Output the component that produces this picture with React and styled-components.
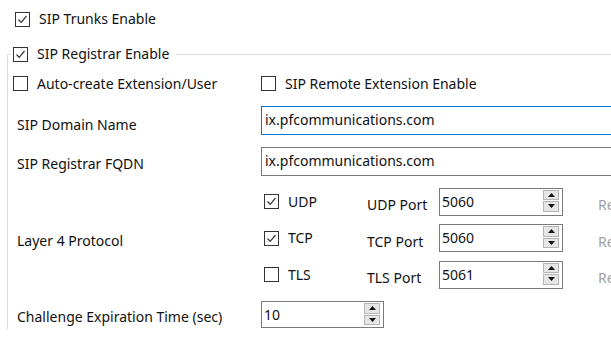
import React from 'react';
import styled, { createGlobalStyle } from 'styled-components';

const GlobalStyle = createGlobalStyle`
  html, body {
    margin: 0;
    padding: 0;
    background: #ffffff;
    overflow: hidden;
  }
  body {
    font-family: "Segoe UI", "Noto Sans", "Open Sans", sans-serif;
    font-size: 14px;
    color: #111;
  }
`;

const Page = styled.div`
  width: 611px;
  height: 355px;
  overflow: hidden;
  position: relative;
`;

const TopRow = styled.div`
  display: flex;
  align-items: center;
  height: 16px;
  margin: 11px 0 0 15px;
`;

const CheckLabel = styled.label`
  display: inline-flex;
  align-items: center;
  gap: 9px;
  white-space: nowrap;
  line-height: 18px;
  margin-left: ${p => p.$offset || 0}px;
`;

const Box = styled.span`
  width: 13px;
  height: 13px;
  border: 1px solid #333;
  background: #fff;
  display: inline-flex;
  align-items: center;
  justify-content: center;
  flex: none;
`;

const Group = styled.fieldset`
  margin: 18px 0 0 7px;
  padding: 10px 0 0 9px;
  border: none;
  border-top: 1px solid #dcdcdc;
  border-left: 1px solid #dcdcdc;
  min-width: 0;
  width: 700px;
`;

const Legend = styled.legend`
  padding: 0 7px 0 2px;
  margin-left: -6px;
  line-height: 18px;
`;

const Form = styled.div`
  display: grid;
  grid-template-columns: 244px 1fr;
  grid-template-rows: 20px 29px 29px 101px 28px;
  row-gap: 12px;
  align-items: center;
`;

const FieldLabel = styled.div`
  white-space: nowrap;
  padding-top: ${p => p.$nudge || 0}px;
`;

const TextInput = styled.div`
  box-sizing: border-box;
  height: 29px;
  width: 420px;
  border: 1px solid ${p => p.$focused ? '#0078d7' : '#7a7a7a'};
  padding: 3px 0 0 3px;
  line-height: 20px;
  background: #fff;
`;

const Protocols = styled.div`
  display: grid;
  grid-template-columns: 103px 72px 124px auto;
  grid-auto-rows: 28px;
  row-gap: 8.5px;
  align-items: center;
  padding-left: 3px;
`;

const PortLabel = styled.div`
  white-space: nowrap;
  padding-top: 6px;
`;

const SpinBox = styled.div`
  box-sizing: border-box;
  width: ${p => p.$width}px;
  height: ${p => p.$height || 28}px;
  border: 1px solid #7a7a7a;
  background: #fff;
  display: flex;
  justify-content: space-between;
  align-items: flex-start;
  padding: 0 3px 0 2px;
`;

const SpinValue = styled.span`
  line-height: 20px;
  padding-top: 3px;
`;

const Spinner = styled.div`
  margin-top: 1px;
  width: 16px;
  height: 22px;
  display: flex;
  flex-direction: column;
  gap: 1px;
`;

const SpinBtn = styled.div`
  flex: 1;
  box-sizing: border-box;
  border: 1px solid #b4b4b4;
  background: #e6e6e6;
  display: flex;
  align-items: center;
  justify-content: center;
`;

const Dim = styled.span`
  color: #a0a0a0;
  padding: 6px 0 0 35px;
  white-space: nowrap;
`;

function Check({ checked }) {
  return (
    <Box>
      {checked && (
        <svg width="11" height="11" viewBox="0 0 11 11">
          <polyline points="1.5,5.5 4.2,8.3 9.5,2" fill="none" stroke="#333" strokeWidth="1.2" />
        </svg>
      )}
    </Box>
  );
}

function Spin({ value, width, height }) {
  return (
    <SpinBox $width={width} $height={height}>
      <SpinValue>{value}</SpinValue>
      <Spinner>
        <SpinBtn>
          <svg width="7" height="4" viewBox="0 0 7 4"><polygon points="0,4 7,4 3.5,0" fill="#111" /></svg>
        </SpinBtn>
        <SpinBtn>
          <svg width="7" height="4" viewBox="0 0 7 4"><polygon points="0,0 7,0 3.5,4" fill="#111" /></svg>
        </SpinBtn>
      </Spinner>
    </SpinBox>
  );
}

const protocols = [
  { name: 'UDP', checked: true, port: '5060' },
  { name: 'TCP', checked: true, port: '5060' },
  { name: 'TLS', checked: false, port: '5061' },
];

function App() {
  return (
    <Page>
      <GlobalStyle />
      <TopRow>
        <CheckLabel><Check checked />SIP Trunks Enable</CheckLabel>
      </TopRow>
      <Group>
        <Legend>
          <CheckLabel><Check checked />SIP Registrar Enable</CheckLabel>
        </Legend>
        <Form>
          <CheckLabel $offset={-4}><Check />Auto-create Extension/User</CheckLabel>
          <CheckLabel><Check />SIP Remote Extension Enable</CheckLabel>

          <FieldLabel $nudge={8}>SIP Domain Name</FieldLabel>
          <TextInput $focused>ix.pfcommunications.com</TextInput>

          <FieldLabel $nudge={4}>SIP Registrar FQDN</FieldLabel>
          <TextInput>ix.pfcommunications.com</TextInput>

          <FieldLabel $nudge={4}>Layer 4 Protocol</FieldLabel>
          <Protocols>
            {protocols.map(p => (
              <React.Fragment key={p.name}>
                <CheckLabel><Check checked={p.checked} />{p.name}</CheckLabel>
                <PortLabel>{p.name} Port</PortLabel>
                <Spin value={p.port} width={124} />
                <Dim>Re</Dim>
              </React.Fragment>
            ))}
          </Protocols>

          <FieldLabel $nudge={4}>Challenge Expiration Time (sec)</FieldLabel>
          <Spin value="10" width={123} height={27} />
        </Form>
      </Group>
    </Page>
  );
}

export default App;
